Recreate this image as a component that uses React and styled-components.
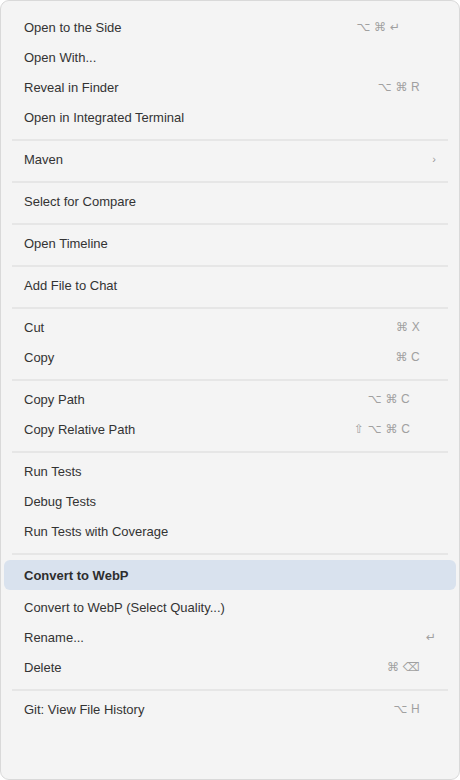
import React from "react";
import styled, { createGlobalStyle } from "styled-components";

const Global = createGlobalStyle`
  html, body { margin: 0; padding: 0; background: #ffffff; }
  * { box-sizing: border-box; }
`;

const Menu = styled.div`
  width: 460px;
  height: 780px;
  background: #f4f4f4;
  border: 1px solid #d9d9d9;
  border-radius: 9px;
  padding: 11px 0 0 0;
  display: flex;
  flex-direction: column;
  font-family: "Liberation Sans", Arial, "DejaVu Sans", sans-serif;
  font-size: 13px;
  color: #333333;
`;

const Item = styled.div`
  height: 30px;
  display: flex;
  align-items: center;
  justify-content: space-between;
  padding: 0 ${(p) => (p.$active ? 20 : 24)}px;
  margin: ${(p) => (p.$active ? "2px 3px" : "0 -1px")};
  border-radius: 6px;
  background: ${(p) => (p.$active ? "#d9e2ee" : "transparent")};
  font-weight: ${(p) => (p.$active ? 700 : 400)};
  color: ${(p) => (p.$active ? "#2e2e2e" : "#333333")};
`;

const Label = styled.span`
  white-space: nowrap;
`;

const Keys = styled.span`
  font-family: "Liberation Sans", "DejaVu Sans", sans-serif;
  font-size: 12px;
  color: #a0a0a0;
  white-space: nowrap;
  margin-right: ${(p) => p.$shift ?? 16}px;
  letter-spacing: 0.2px;
`;

const Chevron = styled.span`
  font-size: 11px;
  color: #9a9a9a;
  margin-right: 0px;
`;

const Separator = styled.div`
  height: 12px;
  padding-top: 7px;
  margin: 0 11px;
  &::after {
    content: "";
    display: block;
    height: 2px;
    background: #e6e6e6;
  }
`;

const groups = [
  [
    { label: "Open to the Side", keys: "⌥ ⌘ ↵", shift: 36 },
    { label: "Open With..." },
    { label: "Reveal in Finder", keys: "⌥ ⌘ R" },
    { label: "Open in Integrated Terminal" },
  ],
  [{ label: "Maven", sub: true }],
  [{ label: "Select for Compare" }],
  [{ label: "Open Timeline" }],
  [{ label: "Add File to Chat" }],
  [
    { label: "Cut", keys: "⌘ X" },
    { label: "Copy", keys: "⌘ C" },
  ],
  [
    { label: "Copy Path", keys: "⌥ ⌘ C", shift: 26 },
    { label: "Copy Relative Path", keys: "⇧ ⌥ ⌘ C", shift: 26 },
  ],
  [
    { label: "Run Tests" },
    { label: "Debug Tests" },
    { label: "Run Tests with Coverage" },
  ],
  [
    { label: "Convert to WebP", active: true },
    { label: "Convert to WebP (Select Quality...)" },
    { label: "Rename...", keys: "↵", shift: 0 },
    { label: "Delete", keys: "⌘ ⌫" },
  ],
  [{ label: "Git: View File History", keys: "⌥ H" }],
];

export default function App() {
  return (
    <>
      <Global />
      <Menu>
        {groups.map((g, gi) => (
          <React.Fragment key={gi}>
            {gi > 0 && <Separator />}
            {g.map((it) => (
              <Item key={it.label} $active={it.active}>
                <Label>{it.label}</Label>
                {it.keys && <Keys $shift={it.shift}>{it.keys}</Keys>}
                {it.sub && <Chevron>›</Chevron>}
              </Item>
            ))}
          </React.Fragment>
        ))}
      </Menu>
    </>
  );
}
